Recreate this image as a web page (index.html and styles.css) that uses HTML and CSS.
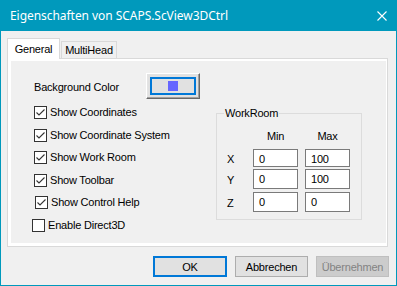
FILE: index.html
```html
<!DOCTYPE html>
<html>
    <head>
        <title>Eigenschaften von SCAPS.ScView3DCtrl</title>
        <meta charset="UTF-8">
        <meta name="viewport" content="width=device-width, initial-scale=1.0">
        <link rel="stylesheet" href="styles.css">
    </head>
    <body>
        <div class="window">
            <div class="titlebar">
                <span class="title">Eigenschaften von SCAPS.ScView3DCtrl</span>
                <svg class="close" width="10" height="10" viewBox="0 0 10 10">
                    <path d="M0.5 0.5 L9.5 9.5 M9.5 0.5 L0.5 9.5" stroke="#fff" stroke-width="1.1" fill="none"/>
                </svg>
            </div>
            <div class="tabs">
                <div class="tab sel">General</div>
                <div class="tab">MultiHead</div>
            </div>
            <div class="panel">
                <div class="page">
                    <div class="bgrow">
                        <span class="bglabel">Background Color</span>
                        <div class="colorbtn"><div class="focus"><span class="swatch"></span></div></div>
                    </div>
                    <div class="body">
                        <div class="checks">
                            <div class="chk"><span class="box"><svg width="11" height="11" viewBox="0 0 11 11"><polyline points="1.5,5.5 4,8 9.5,2.5" fill="none" stroke="#333" stroke-width="1.1"/></svg></span>Show Coordinates</div>
                            <div class="chk"><span class="box"><svg width="11" height="11" viewBox="0 0 11 11"><polyline points="1.5,5.5 4,8 9.5,2.5" fill="none" stroke="#333" stroke-width="1.1"/></svg></span>Show Coordinate System</div>
                            <div class="chk"><span class="box"><svg width="11" height="11" viewBox="0 0 11 11"><polyline points="1.5,5.5 4,8 9.5,2.5" fill="none" stroke="#333" stroke-width="1.1"/></svg></span>Show Work Room</div>
                            <div class="chk"><span class="box"><svg width="11" height="11" viewBox="0 0 11 11"><polyline points="1.5,5.5 4,8 9.5,2.5" fill="none" stroke="#333" stroke-width="1.1"/></svg></span>Show Toolbar</div>
                            <div class="chk right1"><span class="box"><svg width="11" height="11" viewBox="0 0 11 11"><polyline points="1.5,5.5 4,8 9.5,2.5" fill="none" stroke="#333" stroke-width="1.1"/></svg></span>Show Control Help</div>
                            <div class="chk left2"><span class="box"></span>Enable Direct3D</div>
                        </div>
                        <div class="group">
                            <span class="legend">WorkRoom</span>
                            <div class="grid">
                                <span></span><span class="head">Min</span><span class="head">Max</span>
                                <span class="axis">X</span><span class="edit">0</span><span class="edit">100</span>
                                <span class="axis">Y</span><span class="edit">0</span><span class="edit">100</span>
                                <span class="axis">Z</span><span class="edit">0</span><span class="edit">0</span>
                            </div>
                        </div>
                    </div>
                </div>
            </div>
            <div class="buttons">
                <div class="btn def">OK</div>
                <div class="btn">Abbrechen</div>
                <div class="btn off">Übernehmen</div>
            </div>
        </div>
    </body>
</html>
```

FILE: styles.css
```css
body{
    margin: 0;
    background-color: #f0f0f0;
}
.window{
    width: 397px;
    height: 286px;
    box-sizing: border-box;
    border: 1px solid #0099bc;
    border-top: 0;
    background-color: #f0f0f0;
    font-family: "Liberation Sans", Arial, sans-serif;
    font-size: 11px;
    letter-spacing: -0.2px;
    color: #000;
}
.titlebar{
    height: 31px;
    margin: 0 -1px;
    background-color: #0099bc;
    display: flex;
    align-items: center;
    padding: 0 10px 0 10px;
}
.title{
    flex: 1;
    color: #fff;
    font-family: "Noto Sans", sans-serif;
    font-size: 12px;
    letter-spacing: -0.05px;
    margin-top: -1px;
}
.close{
    margin-right: 0;
}
.tabs{
    display: flex;
    align-items: flex-start;
    height: 21px;
    margin: 7px 0 -1px 6px;
}
.tab{
    position: relative;
    box-sizing: border-box;
    height: 17px;
    width: 56px;
    margin-top: 3px;
    margin-left: 1px;
    border: 1px solid #d9d9d9;
    border-bottom: 0;
    background-color: #f0f0f0;
    display: flex;
    align-items: center;
    justify-content: center;
}
.tab.sel{
    z-index: 1;
    height: 21px;
    width: 53px;
    margin-top: 0;
    margin-left: 0;
    background-color: #fff;
}
.panel{
    box-sizing: border-box;
    width: 381px;
    height: 189px;
    margin-left: 6px;
    border: 1px solid #d9d9d9;
    background-color: #fff;
    padding: 2px 1px 3px 3px;
}
.page{
    height: 100%;
    background-color: #f0f0f0;
}
.bgrow{
    display: flex;
    align-items: center;
    padding: 12px 0 0 23px;
}
.bglabel{
    width: 112px;
    margin-top: 2px;
}
.colorbtn{
    box-sizing: border-box;
    width: 54px;
    height: 26px;
    border: 1px solid;
    border-color: #fff #696969 #696969 #fff;
    box-shadow: inset -1px -1px 0 #a0a0a0, inset 1px 1px 0 #e3e3e3;
    background-color: #e1e1e1;
    padding: 3px 0 0 3px;
}
.focus{
    box-sizing: border-box;
    width: 46px;
    height: 18px;
    border: 2px solid #0078d7;
    display: flex;
    align-items: center;
    justify-content: center;
}
.swatch{
    width: 10px;
    height: 10px;
    background-color: #6666ff;
}
.body{
    display: flex;
    margin-top: 7px;
}
.checks{
    width: 182px;
    padding-left: 23px;
}
.chk{
    height: 22.6px;
    display: flex;
    align-items: flex-start;
}
.chk.right1{
    margin-left: 1px;
}
.chk.left2{
    margin-left: -2px;
}
.box{
    box-sizing: border-box;
    width: 13px;
    height: 13px;
    border: 1px solid #333;
    background-color: #fff;
    margin-right: 3px;
    margin-top: 0;
}
.box svg{
    display: block;
}
.group{
    position: relative;
    box-sizing: border-box;
    width: 146px;
    height: 107px;
    margin-top: 7px;
    border: 1px solid #dcdcdc;
    padding: 16px 11px 0 10px;
}
.legend{
    position: absolute;
    top: -7px;
    left: 7px;
    padding: 0 1px;
    background-color: #f0f0f0;
}
.grid{
    display: grid;
    grid-template-columns: 19px 45px 45px;
    grid-template-rows: 14px 20px 20px 20px;
    column-gap: 7px;
    row-gap: 2.5px;
}
.grid .head{
    text-align: center;
    line-height: 14px;
    margin-bottom: 1.5px;
    align-self: end;
}
.axis{
    line-height: 20px;
    margin-top: 1px;
}
.edit{
    box-sizing: border-box;
    border: 1px solid #7a7a7a;
    background-color: #fff;
    line-height: 18px;
    padding-left: 5px;
}
.grid > span:nth-child(4), .grid > span:nth-child(5), .grid > span:nth-child(6){
    margin-top: 2px;
}
.buttons{
    display: flex;
    justify-content: flex-end;
    gap: 8px;
    margin: 9px 7px 0 0;
}
.btn{
    box-sizing: border-box;
    width: 73px;
    height: 21px;
    border: 1px solid #adadad;
    background-color: #e1e1e1;
    display: flex;
    align-items: center;
    justify-content: center;
}
.btn.def{
    border: 2px solid #0078d7;
    width: 74px;
}
.btn.off{
    border-color: #bfbfbf;
    background-color: #cccccc;
    color: #838383;
}
```
